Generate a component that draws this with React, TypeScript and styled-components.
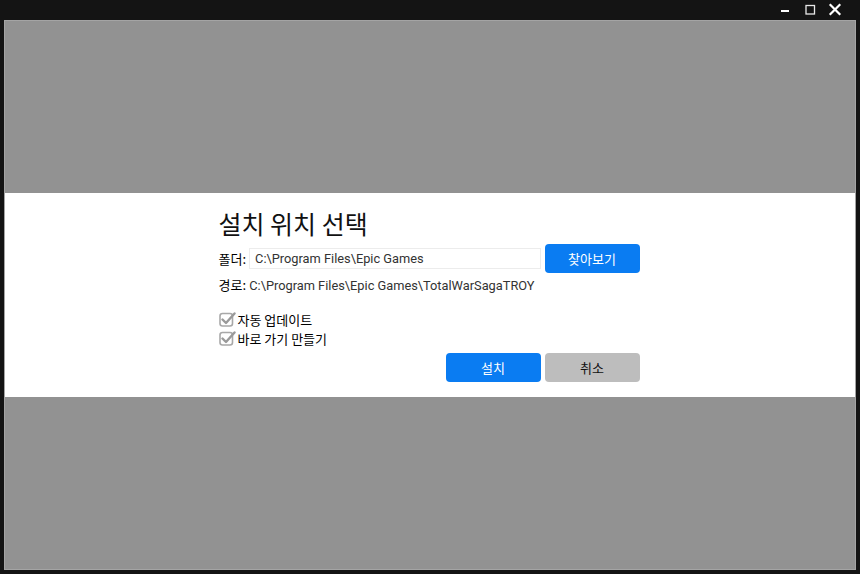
import styled, { createGlobalStyle } from "styled-components"

const GlobalStyle = createGlobalStyle`
  html, body {
    margin: 0;
    padding: 0;
    background: #141414;
  }
  * {
    box-sizing: border-box;
  }
`

const CheckIcon = () => (
  <svg width="17" height="16" viewBox="0 0 17 16">
    <rect x="1" y="2.5" width="12.5" height="12.5" rx="2.5" fill="none" stroke="#a8a8a8" strokeWidth="1.6" />
    <path d="M3.5 8.5 L7 12 L15.5 2.5" fill="none" stroke="#9a9a9a" strokeWidth="2.4" strokeLinecap="round" strokeLinejoin="round" />
  </svg>
)

export default function App() {
  return (
    <>
      <GlobalStyle />
      <Frame>
        <TitleBar>
          <WinButton aria-label="minimize">
            <svg width="12" height="12" viewBox="0 0 12 12">
              <rect x="2" y="6" width="8" height="2" fill="#fff" />
            </svg>
          </WinButton>
          <WinButton aria-label="maximize">
            <svg width="12" height="12" viewBox="0 0 12 12">
              <rect x="2" y="1.5" width="8.5" height="8.5" fill="none" stroke="#e8e8e8" strokeWidth="1.3" />
            </svg>
          </WinButton>
          <WinButton aria-label="close">
            <svg width="14" height="14" viewBox="0 0 14 14">
              <path d="M2.5 2 L11.5 11 M11.5 2 L2.5 11" stroke="#fff" strokeWidth="2.2" strokeLinecap="square" />
            </svg>
          </WinButton>
        </TitleBar>
        <Client>
          <Band>
            <Panel>
              <Title>설치 위치 선택</Title>
              <FolderRow>
                <Label>폴더:</Label>
                <PathInput readOnly value="C:\Program Files\Epic Games" />
                <Button $variant="primary">찾아보기</Button>
              </FolderRow>
              <PathLine>
                <Label>경로:</Label> C:\Program Files\Epic Games\TotalWarSagaTROY
              </PathLine>
              <Options>
                <Option>
                  <CheckIcon />
                  자동 업데이트
                </Option>
                <Option>
                  <CheckIcon />
                  바로 가기 만들기
                </Option>
              </Options>
              <Actions>
                <Button $variant="primary">설치</Button>
                <Button $variant="secondary">취소</Button>
              </Actions>
            </Panel>
          </Band>
        </Client>
      </Frame>
    </>
  )
}

const Frame = styled.div`
  width: 860px;
  height: 574px;
  display: flex;
  flex-direction: column;
  background: #141414;
  padding: 0 4px 4px;
  font-family: "Roboto", "Noto Sans CJK KR", sans-serif;
  color: #222;
`
const TitleBar = styled.div`
  height: 20px;
  display: flex;
  justify-content: flex-end;
  align-items: center;
  padding-right: 11px;
  gap: 5px;
`
const WinButton = styled.span`
  width: 20px;
  height: 16px;
  display: flex;
  align-items: center;
  justify-content: center;
`
const Client = styled.div`
  flex: 1;
  background: #929292;
  display: flex;
  flex-direction: column;
  justify-content: center;
  border: 1px solid #a4a4a4;
`
const Band = styled.div`
  height: 204px;
  background: #fff;
  display: flex;
  justify-content: center;
  padding-right: 2px;
  margin-top: -1px;
`
const Panel = styled.div`
  width: 421px;
  padding-top: 14px;
  display: flex;
  flex-direction: column;
`
const Title = styled.h1`
  margin: 0;
  font-size: 25px;
  font-weight: 400;
  line-height: 32px;
  color: #111;
  font-family: "Noto Sans CJK KR", sans-serif;
`
const FolderRow = styled.div`
  display: flex;
  align-items: center;
  margin-top: 5px;
  height: 29px;
`
const Label = styled.span`
  font-family: "Noto Sans CJK KR", sans-serif;
  font-size: 13px;
  font-weight: 400;
  color: #000;
`
const PathInput = styled.input`
  flex: 1;
  height: 21px;
  margin: 0 4px 0 3px;
  border: 1px solid #ececec;
  padding: 0 5px;
  font-family: "Roboto", sans-serif;
  font-size: 12.8px;
  color: #333;
  outline: none;
`
const Button = styled.button<{ $variant: "primary" | "secondary" }>`
  width: 95px;
  height: 29px;
  border: 0;
  border-radius: 4px;
  font-family: "Noto Sans CJK KR", sans-serif;
  font-size: 13px;
  font-weight: 400;
  background: ${(p) => (p.$variant === "primary" ? "#0a7cf2" : "#bdbdbd")};
  color: ${(p) => (p.$variant === "primary" ? "#fff" : "#111")};
`
const PathLine = styled.div`
  margin-top: 3px;
  font-size: 12.8px;
  line-height: 17px;
  color: #333;
`
const Options = styled.div`
  margin-top: 17px;
  display: flex;
  flex-direction: column;
  gap: 2px;
`
const Option = styled.label`
  display: flex;
  align-items: center;
  gap: 2px;
  height: 17px;
  font-family: "Noto Sans CJK KR", sans-serif;
  font-size: 13px;
  font-weight: 400;
  color: #000;
`
const Actions = styled.div`
  display: flex;
  justify-content: flex-end;
  gap: 4px;
  margin-top: 6px;
`
